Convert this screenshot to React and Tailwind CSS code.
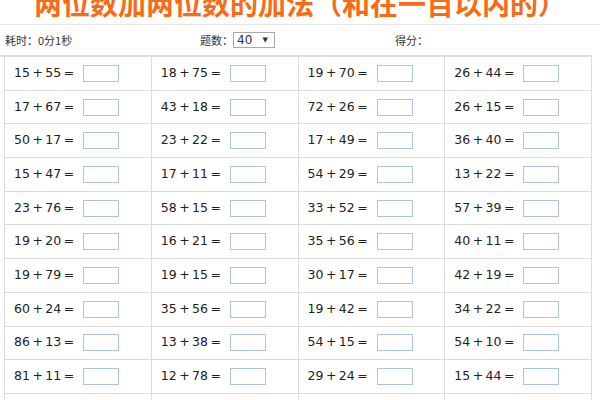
import React from "react";

const problems = [
  ["15 + 55 =", "18 + 75 =", "19 + 70 =", "26 + 44 ="],
  ["17 + 67 =", "43 + 18 =", "72 + 26 =", "26 + 15 ="],
  ["50 + 17 =", "23 + 22 =", "17 + 49 =", "36 + 40 ="],
  ["15 + 47 =", "17 + 11 =", "54 + 29 =", "13 + 22 ="],
  ["23 + 76 =", "58 + 15 =", "33 + 52 =", "57 + 39 ="],
  ["19 + 20 =", "16 + 21 =", "35 + 56 =", "40 + 11 ="],
  ["19 + 79 =", "19 + 15 =", "30 + 17 =", "42 + 19 ="],
  ["60 + 24 =", "35 + 56 =", "19 + 42 =", "34 + 22 ="],
  ["86 + 13 =", "13 + 38 =", "54 + 15 =", "54 + 10 ="],
  ["81 + 11 =", "12 + 78 =", "29 + 24 =", "15 + 44 ="],
];

export default function App() {
  return (
    <div className="w-[600px] h-[400px] overflow-hidden bg-white relative" style={{ fontFamily: '"DejaVu Sans", Verdana, sans-serif' }}>
      <div className="h-[25px] border-b border-[#e6e6e6] overflow-hidden">
        <div
          className="text-center text-[28px] leading-[28px] font-bold text-[#fa6a14] mt-[-11px] whitespace-nowrap"
          style={{ fontFamily: '"Noto Sans CJK SC", sans-serif' }}
        >
          两位数加两位数的加法（和在一百以内的）
        </div>
      </div>
      <div
        className="h-[30px] flex items-center text-[11px] text-[#333] relative"
        style={{ fontFamily: '"Noto Sans CJK SC", sans-serif' }}
      >
        <div className="pl-[5px] w-[200px]">耗时：0分1秒</div>
        <div className="flex items-center w-[195px]">
          <span>题数：</span>
          <div className="w-[42px] h-[16px] border border-[#aaa] flex items-center justify-between pl-[3px] pr-[6px] text-[12px] leading-none" style={{ fontFamily: '"DejaVu Sans", sans-serif' }}>
            <span>40</span>
            <span className="text-[7px]">▼</span>
          </div>
        </div>
        <div>得分：</div>
      </div>
      <div className="w-[592px] border-t-2 border-[#dedede]">
        <div className="ml-[4px] w-[588px] border-l border-[#dcdcdc] grid grid-cols-4">
          {problems.flat().map((p, i) => (
            <div
              key={i}
              className="h-[33.7px] border-r border-b border-[#dcdcdc] flex items-center pl-[9px] text-[12.5px] text-[#222]"
            >
              <span className="w-[69px] whitespace-nowrap [word-spacing:-1.5px]">{p}</span>
              <div className="w-[36px] h-[17px] border border-[#a9c2e6] bg-white" />
            </div>
          ))}
          {[0, 1, 2, 3].map((i) => (
            <div key={"e" + i} className="h-[33.7px] border-r border-[#dcdcdc]" />
          ))}
        </div>
      </div>
    </div>
  );
}
